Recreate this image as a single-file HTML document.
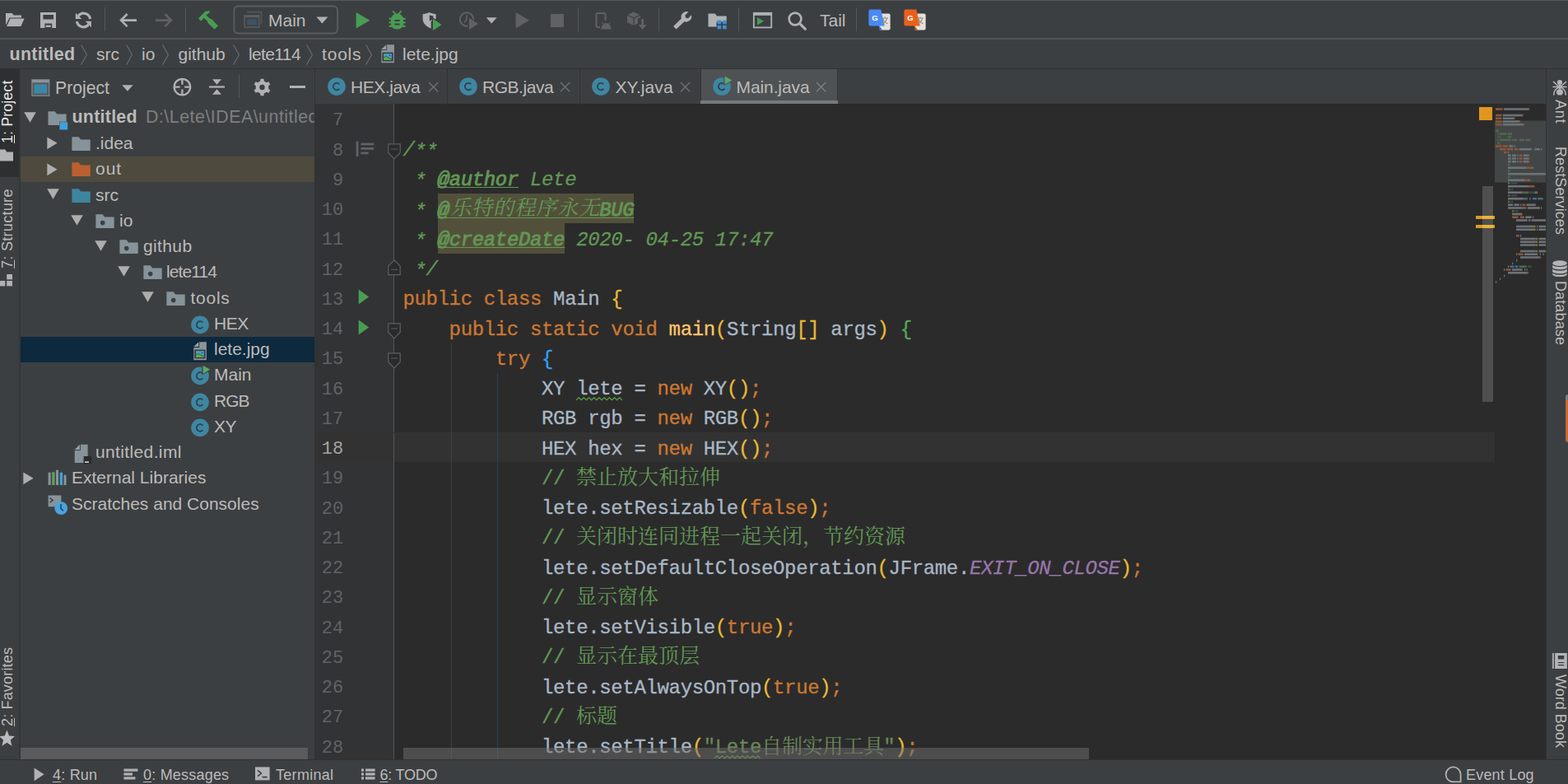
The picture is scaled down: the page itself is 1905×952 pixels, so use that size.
<!DOCTYPE html>
<html lang="en"><head><meta charset="utf-8"><title>untitled - Main.java</title>
<style>
*{box-sizing:border-box}
html,body{margin:0;padding:0}
html{width:1905px;height:952px;overflow:hidden;background:#3c3f41}
body{width:1905px;height:952px;overflow:hidden;background:#3c3f41;position:relative;font-family:"Liberation Sans",sans-serif;font-size:21px;color:#bbbbbb}
.a{position:absolute;display:block}
.t{position:absolute;white-space:pre;font-family:"Liberation Sans",sans-serif}
.m{position:absolute;white-space:pre;font-family:"Liberation Mono",monospace;font-size:24px;letter-spacing:-0.35px;line-height:36px;color:#a9b7c6;-webkit-text-stroke:0.3px}
.k{color:#cc7832}.d{color:#629755;font-style:italic}.dt{color:#629755;font-style:italic;font-weight:normal;text-decoration:underline;text-decoration-thickness:1.2px;text-underline-offset:2.4px;text-decoration-skip-ink:none;-webkit-text-stroke:0.85px}
.c{color:#629755}.s{color:#6a8759}.f{color:#ffc66d}.sf{color:#9876aa;font-style:italic}
.b1{color:#e8ba36}.b2{color:#54a857}.b3{color:#359ff4}
.ln{position:absolute;white-space:pre;font-family:"Liberation Mono",monospace;font-size:22px;line-height:36px;color:#606366;text-align:right;width:60px;left:357.2px}
.vt{position:absolute;white-space:pre;font-size:18px;line-height:24px;color:#bbbbbb;transform-origin:0 0}
u{text-decoration:underline;text-decoration-thickness:1px;text-underline-offset:1.5px}
.st{position:relative;top:2.2px}

</style></head>
<body>
<div class="a" style="left:0px;top:0px;width:1905px;height:1px;background:#55585a;"></div>
<div class="a" style="left:0px;top:46px;width:1905px;height:2px;background:#515355;"></div>
<div class="a" style="left:0px;top:83px;width:1905px;height:1px;background:#2f3133;"></div>
<svg class="a" style="left:7px;top:15px;" width="24" height="18" viewBox="0 0 24 18"><path fill="#afb1b3" d="M0 1h7.6l2 2.4H19v3H4.6L0 15.6z"/><path fill="#afb1b3" d="M5.6 7.6H22.6L18.4 17H1z"/></svg>
<svg class="a" style="left:48px;top:14px;" width="22" height="21" viewBox="0 0 22 21"><path fill="#afb1b3" fill-rule="evenodd" d="M1 1h19v19H1z M4.4 4h12.6v5.6H4.4z M6.4 14.6h8.8V20H6.4z"/><rect x="7.6" y="16.6" width="6" height="2.4" fill="#afb1b3"/></svg>
<svg class="a" style="left:90px;top:13px;" width="24" height="24" viewBox="0 0 24 24"><g fill="none" stroke="#afb1b3" stroke-width="3.2"><path d="M19.600 10A8.100 8.100 0 0 0 5.300 6.300"/><path d="M3.400 13A8.100 8.100 0 0 0 17.700 16.700"/></g><path fill="#afb1b3" d="M1.800 2.700V10H9.500z M20.900 20.200V12.800H13.800z"/></svg>
<div class="a" style="left:127px;top:9px;width:1px;height:29px;background:#555759;"></div>
<svg class="a" style="left:143px;top:15px;" width="26" height="20" viewBox="0 0 26 20"><path fill="none" stroke="#afb1b3" stroke-width="2.6" d="M23 9.6H4 M11.6 2L4 9.6l7.6 7.6"/></svg>
<svg class="a" style="left:187px;top:15px;" width="26" height="20" viewBox="0 0 26 20"><path fill="none" stroke="#5f6163" stroke-width="2.6" d="M2 9.6H21 M13.4 2L21 9.6l-7.6 7.6"/></svg>
<div class="a" style="left:225px;top:9px;width:1px;height:29px;background:#555759;"></div>
<svg class="a" style="left:240px;top:12px;" width="27" height="25" viewBox="0 0 27 25"><path fill="#499c54" d="M0.900 10.400L9.400 1.750L14.700 1.200L15.100 2.700L10.500 6.500L15.600 10.900L16.400 10.500L25.100 19.500L20.500 23.500L12.200 15.600L12.600 14.600L7.900 9.700L4.500 13.500z"/></svg>
<svg class="a" style="left:282px;top:5px;" width="131" height="38" viewBox="0 0 131 38"><rect x="2.400" y="2.500" width="125.700" height="33" rx="5" fill="none" stroke="#5b5e60" stroke-width="1.800"/></svg>
<svg class="a" style="left:296px;top:13px;" width="24" height="22" viewBox="0 0 24 22"><path fill="#53575a" d="M4 0.700H22.300V15.800H20.600V2.600H4z"/><rect x="1.100" y="6" width="17.500" height="14" fill="#3c3f41" stroke="#5a5e61" stroke-width="1.500"/><rect x="0.400" y="5.250" width="18.900" height="3" fill="#5a5e61"/><rect x="4" y="10.200" width="12.100" height="7.200" fill="#3d5363"/></svg>
<div class="t " style="left:326px;top:9.72px;font-size:21px;line-height:29px;color:#bbbbbb;">Main</div>
<svg class="a" style="left:384px;top:20px;" width="15" height="9" viewBox="0 0 15 9"><path fill="#afb1b3" d="M0.4 0.6h14L7.4 8.4z"/></svg>
<svg class="a" style="left:431px;top:14px;" width="20" height="22" viewBox="0 0 20 22"><path fill="#499c54" d="M1.6 1v19.4L18.4 10.7z"/></svg>
<svg class="a" style="left:471px;top:12px;" width="23" height="25" viewBox="0 0 23 25"><g fill="#499c54"><path d="M11.5 4.4C16 4.4 19 7.8 19 12v5c0 4-3 6.4-7.5 6.4S4 21 4 17v-5c0-4.2 3-7.600 7.5-7.600z"/><rect x="1.6" y="9.700" width="20" height="2.200"/><rect x="1.6" y="14.200" width="20" height="2.200"/><rect x="1.6" y="18.700" width="20" height="2.200"/></g><path stroke="#499c54" stroke-width="2" fill="none" d="M6.200 1.400l3.800 4.200 M16.600 1.400l-3.800 4.200"/><path stroke="#3c3f41" stroke-width="2" d="M8.400 13h6.200 M8.400 17.500h6.200"/></svg>
<svg class="a" style="left:512px;top:14px;" width="26" height="25" viewBox="0 0 26 25"><path fill="#afb1b3" d="M1.600 3.200C5 2.800 7.600 2 9.600 1c2 1 4.600 1.800 8 2.200v6L11.600 12v8.400C5 18 1.600 13.600 1.600 8.400z"/><path fill="#3c3f41" d="M9.800 4.200c1.600.6 3 1 4.600 1.200v3.600L9.800 11.600z"/><path fill="#3c3f41" d="M12.600 6.400v18.200l13.800-9.100z"/><path fill="#499c54" d="M14 8.800v14.200l10.600-7.100z"/></svg>
<svg class="a" style="left:556px;top:13px;" width="27" height="26" viewBox="0 0 27 26"><circle cx="11" cy="10.500" r="8.200" fill="none" stroke="#5f6163" stroke-width="2"/><path fill="none" stroke="#5f6163" stroke-width="1.600" d="M11 5v5.600l-3 3.600"/><path fill="#3c3f41" d="M12.600 6.400v18.600l14-9.300z"/><path fill="#5f6163" d="M14 8.800v14.200l11-7.100z"/></svg>
<svg class="a" style="left:590px;top:21px;" width="15" height="9" viewBox="0 0 15 9"><path fill="#afb1b3" d="M0.800 0.200h12.800L7.200 7.400z"/></svg>
<svg class="a" style="left:625px;top:14px;" width="20" height="22" viewBox="0 0 20 22"><path fill="#5f6163" d="M1.6 1v19.4L18 10.7z"/></svg>
<div class="a" style="left:668.5px;top:16.5px;width:16px;height:16px;background:#5f6163;"></div>
<div class="a" style="left:702px;top:9px;width:1px;height:29px;background:#555759;"></div>
<svg class="a" style="left:722px;top:14px;" width="22" height="23" viewBox="0 0 22 23"><rect x="2.500" y="2" width="11" height="17" rx="2" fill="none" stroke="#5f6163" stroke-width="2"/><path fill="#3c3f41" d="M7 11h15v12H7z"/><path fill="#5f6163" d="M8.300 21.400a6.100 7.400 0 0 1 12.200 0z"/><path stroke="#5f6163" stroke-width="1.200" d="M10.800 15.200l-1.300-1.900 M18 15.200l1.300-1.900"/></svg>
<svg class="a" style="left:761px;top:13px;" width="26" height="25" viewBox="0 0 26 25"><path fill="#5f6163" d="M9 1.6l8 3.6v9L9 18 1 14.2v-9z"/><path fill="none" stroke="#3c3f41" stroke-width="1.2" d="M1 5.2l8 3.6 8-3.600 M9 8.800V18"/><path fill="#3c3f41" d="M14 9h11v14H14z"/><path fill="#5f6163" d="M18.200 10h2.800v7h3.600l-5 6-5-6h3.600z"/></svg>
<div class="a" style="left:800px;top:9px;width:1px;height:29px;background:#555759;"></div>
<svg class="a" style="left:817px;top:13px;" width="24" height="23" viewBox="0 0 24 23"><path fill="#afb1b3" d="M15.400 1.200a6.600 6.600 0 0 1 4 .4l-4 4 .6 3 3 .6 4-4a6.600 6.600 0 0 1-8.600 8L4.600 22.600 1 19l9.800-9.600a6.600 6.600 0 0 1 4.600-8.200z"/></svg>
<svg class="a" style="left:859px;top:15px;" width="25" height="22" viewBox="0 0 25 22"><path fill="#afb1b3" d="M1.500 1.500h8.200l2.300 3H23.700v7H11.500v6H1.500z"/><g fill="#3e8ed0"><rect x="12.500" y="9.600" width="4.700" height="4.600"/><rect x="19" y="9.600" width="4.700" height="4.600"/><rect x="12.500" y="15.700" width="4.700" height="4.600"/><rect x="19" y="15.700" width="4.700" height="4.600"/></g></svg>
<div class="a" style="left:897px;top:9px;width:1px;height:29px;background:#555759;"></div>
<svg class="a" style="left:914px;top:14px;" width="25" height="21" viewBox="0 0 25 21"><rect x="1.800" y="1.800" width="21.400" height="17.600" fill="none" stroke="#afb1b3" stroke-width="1.800"/><rect x="1.800" y="1.800" width="21.400" height="3" fill="#afb1b3"/><path fill="#499c54" d="M6 7v9.600l8-4.800z"/></svg>
<svg class="a" style="left:956px;top:13px;" width="25" height="24" viewBox="0 0 25 24"><circle cx="10" cy="10" r="7.400" fill="none" stroke="#afb1b3" stroke-width="2.600"/><path stroke="#afb1b3" stroke-width="3.200" stroke-linecap="round" d="M15.600 15.600l6.600 6.600"/></svg>
<div class="t " style="left:996px;top:10.22px;font-size:21px;line-height:29px;color:#bbbbbb;">Tail</div>
<div class="a" style="left:1040px;top:9px;width:1px;height:29px;background:#555759;"></div>
<svg class="a" style="left:1055px;top:11px;" width="28" height="27" viewBox="0 0 28 27"><path fill="#e4e2da" d="M10 5.600h14.600a2 2 0 0 1 2 2v15.800a2 2 0 0 1-2 2H14z"/><path fill="#3a6fcb" d="M13 20l4 5.600-3.600-.2z"/><path fill="#4a8af4" d="M2.400 0.600h12.800l4.600 20H2.400a2 2 0 0 1-2-2v-16a2 2 0 0 1 2-2z"/><text x="4.200" y="14" font-family="Liberation Sans" font-weight="bold" font-size="9.6" fill="#fff">G</text><g fill="none" stroke="#8a8a80" stroke-width="1.100"><path d="M16 11h8 M20 9.400V11 M17.600 11c.6 3 3 5.600 6 6.800 M22.600 11c-.6 3-2.800 5.800-6 7"/></g></svg>
<svg class="a" style="left:1098px;top:11px;" width="28" height="27" viewBox="0 0 28 27"><path fill="#e4e2da" d="M10 5.600h14.600a2 2 0 0 1 2 2v15.800a2 2 0 0 1-2 2H14z"/><path fill="#c24e14" d="M13 20l4 5.600-3.600-.2z"/><path fill="#e8601c" d="M2.400 0.600h12.800l4.600 20H2.400a2 2 0 0 1-2-2v-16a2 2 0 0 1 2-2z"/><text x="4.200" y="14" font-family="Liberation Sans" font-weight="bold" font-size="9.6" fill="#fff">G</text><g fill="none" stroke="#8a8a80" stroke-width="1.100"><path d="M16 11h8 M20 9.400V11 M17.600 11c.6 3 3 5.600 6 6.800 M22.600 11c-.6 3-2.800 5.800-6 7"/></g></svg>
<div class="t " style="left:11.5px;top:50.58px;font-size:21.4px;line-height:30px;color:#bbbbbb;font-weight:bold;letter-spacing:0.334px;">untitled</div>
<svg class="a" style="left:98.1px;top:53.6px;" width="10" height="25" viewBox="0 0 10 25"><path fill="none" stroke="#6b6e70" stroke-width="1.100" d="M0.600 0.400l6.800 12L0.600 24.400"/></svg>
<div class="t " style="left:117px;top:51.22px;font-size:21px;line-height:29px;color:#bbbbbb;">src</div>
<svg class="a" style="left:152.6px;top:53.6px;" width="10" height="25" viewBox="0 0 10 25"><path fill="none" stroke="#6b6e70" stroke-width="1.100" d="M0.600 0.400l6.800 12L0.600 24.400"/></svg>
<div class="t " style="left:172px;top:51.22px;font-size:21px;line-height:29px;color:#bbbbbb;">io</div>
<svg class="a" style="left:196.6px;top:53.6px;" width="10" height="25" viewBox="0 0 10 25"><path fill="none" stroke="#6b6e70" stroke-width="1.100" d="M0.600 0.400l6.800 12L0.600 24.400"/></svg>
<div class="t " style="left:216.5px;top:51.22px;font-size:21px;line-height:29px;color:#bbbbbb;">github</div>
<svg class="a" style="left:283.3px;top:53.6px;" width="10" height="25" viewBox="0 0 10 25"><path fill="none" stroke="#6b6e70" stroke-width="1.100" d="M0.600 0.400l6.800 12L0.600 24.400"/></svg>
<div class="t " style="left:302px;top:51.22px;font-size:21px;line-height:29px;color:#bbbbbb;letter-spacing:-0.623px;">lete114</div>
<svg class="a" style="left:371.6px;top:53.6px;" width="10" height="25" viewBox="0 0 10 25"><path fill="none" stroke="#6b6e70" stroke-width="1.100" d="M0.600 0.400l6.800 12L0.600 24.400"/></svg>
<div class="t " style="left:391px;top:51.22px;font-size:21px;line-height:29px;color:#bbbbbb;letter-spacing:0.810px;">tools</div>
<svg class="a" style="left:444.20000000000005px;top:53.6px;" width="10" height="25" viewBox="0 0 10 25"><path fill="none" stroke="#6b6e70" stroke-width="1.100" d="M0.600 0.400l6.800 12L0.600 24.400"/></svg>
<svg class="a" style="left:463.4px;top:54.2px;" width="17" height="23" viewBox="0 0 17 23"><path fill="#8d9499" d="M7.200 0.300H15.900V22.300H0.300V7H7.200z"/><path fill="#9ba1a6" d="M0.300 6L6.300 0.300V6z"/><rect x="1.400" y="9.600" width="13.200" height="10.800" fill="#363a3d"/><rect x="3.100" y="11.100" width="9.800" height="7.900" fill="#45a0c8"/><path fill="#5cab48" d="M3.100 19v-3l2.600-1.700 7.200 3.700v1z"/><path fill="none" stroke="#363a3d" stroke-width="0.700" d="M3.100 16l2.600-1.700 7.200 3.700"/><circle cx="10.600" cy="13.300" r="0.800" fill="#363a3d"/></svg>
<div class="t " style="left:489px;top:51.22px;font-size:21px;line-height:29px;color:#bbbbbb;">lete.jpg</div>
<div class="a" style="left:0px;top:84px;width:23px;height:130.5px;background:#2d2f30;"></div>
<div class="a" style="left:23px;top:84px;width:2px;height:839px;background:#34373a;"></div>
<div class="vt" style="left:-2.6px;top:174.4px;font-size:18px;color:#e6e6e6;letter-spacing:0.040px;transform:rotate(-90deg)"><u>1</u>: Project</div>
<svg class="a" style="left:0px;top:181.4px;" width="17" height="16" viewBox="0 0 17 16"><path fill="#b2b4b5" d="M0 0.600h6.200l2 2.800H16V14.400H0z"/></svg>
<div class="vt" style="left:-2.6px;top:326.2px;font-size:18px;color:#bbb;letter-spacing:0.305px;transform:rotate(-90deg)"><u>7</u>: Structure</div>
<svg class="a" style="left:0px;top:332px;" width="16" height="17" viewBox="0 0 16 17"><g fill="#afb1b3"><rect x="-1" y="9" width="7.300" height="6.400"/><rect x="8.200" y="9" width="6.800" height="6.400"/><rect x="8.200" y="1" width="6.800" height="6.400"/></g></svg>
<div class="vt" style="left:-2.6px;top:881.6px;font-size:18px;color:#bbb;letter-spacing:0.169px;transform:rotate(-90deg)"><u>2</u>: Favorites</div>
<svg class="a" style="left:-1px;top:886px;" width="19" height="21" viewBox="0 0 19 21"><path fill="#b8babb" d="M9.400 0.600l2.700 6.900 7 .5-5.400 4.600 1.800 7.200-6.100-4-6.100 4 1.800-7.200L-.3 8l7-.5z"/></svg>
<div class="a" style="left:0px;top:922px;width:1905px;height:1.4px;background:#2f3132;"></div>
<svg class="a" style="left:41px;top:932px;" width="14" height="18" viewBox="0 0 14 18"><path fill="#afb1b3" d="M0.600 0.400v15.800L12.600 8.300z"/></svg>
<div class="t " style="left:64px;top:928.56px;font-size:18px;line-height:25px;color:#bbbbbb;letter-spacing:0.213px;"><u>4</u>: Run</div>
<svg class="a" style="left:149.5px;top:932.6px;" width="19" height="15" viewBox="0 0 19 15"><g fill="#afb1b3"><rect x="0.400" y="0.500" width="17" height="3.200"/><rect x="0.400" y="5.400" width="10.600" height="3.200"/><rect x="0.400" y="10.300" width="14" height="3.200"/></g></svg>
<div class="t " style="left:174px;top:928.56px;font-size:18px;line-height:25px;color:#bbbbbb;letter-spacing:0.205px;"><u>0</u>: Messages</div>
<svg class="a" style="left:310px;top:931px;" width="18" height="17" viewBox="0 0 18 17"><rect x="0" y="0.400" width="17.600" height="16" fill="#afb1b3"/><path fill="none" stroke="#3c3f41" stroke-width="1.600" d="M3 4.400l4.400 3.600L3 11.600 M8.600 12.600h6"/></svg>
<div class="t " style="left:335px;top:928.56px;font-size:18px;line-height:25px;color:#bbbbbb;letter-spacing:0.297px;">Terminal</div>
<svg class="a" style="left:439px;top:932.6px;" width="17" height="15" viewBox="0 0 17 15"><g fill="#afb1b3"><rect x="0" y="0.500" width="3" height="3.200"/><rect x="5" y="0.500" width="11.600" height="3.200"/><rect x="0" y="5.400" width="3" height="3.200"/><rect x="5" y="5.400" width="11.600" height="3.200"/><rect x="0" y="10.300" width="3" height="3.200"/><rect x="5" y="10.300" width="11.600" height="3.200"/></g></svg>
<div class="t " style="left:461.5px;top:928.56px;font-size:18px;line-height:25px;color:#bbbbbb;letter-spacing:-0.210px;"><u>6</u>: TODO</div>
<svg class="a" style="left:1755px;top:929.6px;" width="22" height="22" viewBox="0 0 22 22"><path fill="none" stroke="#afb1b3" stroke-width="1.800" d="M19.600 10.400A9 9 0 1 0 10.600 19.400H19.600z"/></svg>
<div class="t " style="left:1781px;top:928.56px;font-size:18px;line-height:25px;color:#bbbbbb;letter-spacing:0.192px;">Event Log</div>
<svg class="a" style="left:38px;top:96px;" width="23" height="22" viewBox="0 0 23 22"><rect x="0.900" y="0.900" width="20.800" height="19.400" fill="#555b5f" stroke="#7d878d" stroke-width="1.300"/><rect x="0.900" y="0.900" width="20.800" height="3.400" fill="#89949a"/><rect x="3.600" y="6.300" width="15.400" height="11.200" fill="#3b88a8"/></svg>
<div class="t " style="left:67px;top:91.65px;font-size:21.2px;line-height:30px;color:#bbbbbb;">Project</div>
<svg class="a" style="left:148px;top:103px;" width="14" height="8" viewBox="0 0 14 8"><path fill="#afb1b3" d="M0.200 0.200h13.400L6.900 7.800z"/></svg>
<svg class="a" style="left:209px;top:94px;" width="25" height="24" viewBox="0 0 25 24"><circle cx="12.400" cy="11.600" r="9.800" fill="none" stroke="#afb1b3" stroke-width="2.300"/><path stroke="#afb1b3" stroke-width="2.300" d="M12.400 1.400v7.400 M12.400 14.400v7.400 M2.200 11.600h7.400 M15.200 11.600h7.400"/></svg>
<svg class="a" style="left:253px;top:95px;" width="21" height="21" viewBox="0 0 21 21"><path fill="#afb1b3" d="M5 1.200h11l-5.500 6.600z M5 19.800h11l-5.500-6.600z"/><rect x="1" y="9.400" width="19" height="2.200" fill="#afb1b3"/></svg>
<div class="a" style="left:290px;top:90px;width:1px;height:29px;background:#555759;"></div>
<svg class="a" style="left:307px;top:95px;" width="23" height="23" viewBox="0 0 23 23"><path fill="#afb1b3" fill-rule="evenodd" d="M19.20 12.78 L21.33 14.39 L19.35 17.82 L16.89 16.78 L13.81 18.55 L13.48 21.21 L9.52 21.21 L9.19 18.55 L6.11 16.78 L3.65 17.82 L1.67 14.39 L3.80 12.78 L3.80 9.22 L1.67 7.61 L3.65 4.18 L6.11 5.22 L9.19 3.45 L9.52 0.79 L13.48 0.79 L13.81 3.45 L16.89 5.22 L19.35 4.18 L21.33 7.61 L19.20 9.22z M14.70 11.00a3.2 3.2 0 1 0 -6.40 0a3.2 3.2 0 1 0 6.40 0z"/></svg>
<div class="a" style="left:352px;top:103.5px;width:19px;height:3.2px;background:#afb1b3;"></div>
<div class="a" style="left:25px;top:190.0px;width:357.5px;height:31.25px;background:#4e4a3e;"></div>
<div class="a" style="left:25px;top:408.75px;width:357.5px;height:31.25px;background:#0d293e;"></div>
<svg class="a" style="left:28.6px;top:135.7px;" width="16" height="14" viewBox="0 0 16 14"><path fill="#adadad" d="M0.200 0.300h14.600L7.500 12.700z"/></svg>
<svg class="a" style="left:58px;top:134.9px;" width="25" height="23" viewBox="0 0 25 23"><path fill="#87939a" d="M0.500 0.300h8.200l2.500 3.200H22.600V12.800h-8.600v4.200H0.500z"/><rect x="14.400" y="13.200" width="9.800" height="9.300" fill="#40a0dc"/></svg>
<div class="t " style="left:87.5px;top:127.28px;font-size:21.4px;line-height:30px;color:#bbbbbb;font-weight:bold;letter-spacing:0.262px;">untitled</div>
<div class="t " style="left:177px;top:127.28px;font-size:21.4px;line-height:30px;color:#7d7f80;letter-spacing:0.488px;">D:\Lete\IDEA\untitled</div>
<svg class="a" style="left:57px;top:166.45px;" width="14" height="16" viewBox="0 0 14 16"><path fill="#adadad" d="M0.300 0.400v14.800L12.600 7.800z"/></svg>
<svg class="a" style="left:87px;top:166.15px;" width="24" height="18" viewBox="0 0 24 18"><path fill="#87939a" d="M0.400 0.200h8.200l2.500 3.200H22.700V17H0.400z"/></svg>
<div class="t " style="left:116px;top:159.17px;font-size:21px;line-height:29px;color:#bbbbbb;">.idea</div>
<svg class="a" style="left:57px;top:197.7px;" width="14" height="16" viewBox="0 0 14 16"><path fill="#adadad" d="M0.300 0.400v14.800L12.600 7.800z"/></svg>
<svg class="a" style="left:87px;top:197.4px;" width="24" height="18" viewBox="0 0 24 18"><path fill="#bb6030" d="M0.400 0.200h8.200l2.500 3.200H22.700V17H0.400z"/></svg>
<div class="t " style="left:116px;top:190.42px;font-size:21px;line-height:29px;color:#bbbbbb;letter-spacing:1.003px;">out</div>
<svg class="a" style="left:57.1px;top:229.45px;" width="16" height="14" viewBox="0 0 16 14"><path fill="#adadad" d="M0.200 0.300h14.600L7.500 12.700z"/></svg>
<svg class="a" style="left:87px;top:228.65px;" width="24" height="18" viewBox="0 0 24 18"><path fill="#3e86a0" d="M0.400 0.200h8.200l2.500 3.200H22.700V17H0.400z"/></svg>
<div class="t " style="left:116px;top:221.67px;font-size:21px;line-height:29px;color:#bbbbbb;">src</div>
<svg class="a" style="left:85.6px;top:260.7px;" width="16" height="14" viewBox="0 0 16 14"><path fill="#adadad" d="M0.200 0.300h14.600L7.500 12.700z"/></svg>
<svg class="a" style="left:116px;top:259.9px;" width="24" height="18" viewBox="0 0 24 18"><path fill="#87939a" d="M0.400 0.200h8.200l2.500 3.200H22.700V17H0.400z"/><circle cx="8.700" cy="10.600" r="2.800" fill="#3c3f41"/></svg>
<div class="t " style="left:145px;top:252.92px;font-size:21px;line-height:29px;color:#bbbbbb;">io</div>
<svg class="a" style="left:114.6px;top:291.95px;" width="16" height="14" viewBox="0 0 16 14"><path fill="#adadad" d="M0.200 0.300h14.600L7.500 12.700z"/></svg>
<svg class="a" style="left:145px;top:291.15px;" width="24" height="18" viewBox="0 0 24 18"><path fill="#87939a" d="M0.400 0.200h8.200l2.500 3.200H22.700V17H0.400z"/><circle cx="8.700" cy="10.600" r="2.800" fill="#3c3f41"/></svg>
<div class="t " style="left:174px;top:284.17px;font-size:21px;line-height:29px;color:#bbbbbb;letter-spacing:0.376px;">github</div>
<svg class="a" style="left:143.1px;top:323.2px;" width="16" height="14" viewBox="0 0 16 14"><path fill="#adadad" d="M0.200 0.300h14.600L7.500 12.700z"/></svg>
<svg class="a" style="left:173.5px;top:322.4px;" width="24" height="18" viewBox="0 0 24 18"><path fill="#87939a" d="M0.400 0.200h8.200l2.500 3.200H22.700V17H0.400z"/><circle cx="8.700" cy="10.600" r="2.800" fill="#3c3f41"/></svg>
<div class="t " style="left:202px;top:315.42px;font-size:21px;line-height:29px;color:#bbbbbb;letter-spacing:-0.915px;">lete114</div>
<svg class="a" style="left:172.1px;top:354.45px;" width="16" height="14" viewBox="0 0 16 14"><path fill="#adadad" d="M0.200 0.300h14.600L7.500 12.700z"/></svg>
<svg class="a" style="left:202px;top:353.65px;" width="24" height="18" viewBox="0 0 24 18"><path fill="#87939a" d="M0.400 0.200h8.200l2.500 3.200H22.700V17H0.400z"/><circle cx="8.700" cy="10.600" r="2.800" fill="#3c3f41"/></svg>
<div class="t " style="left:231.5px;top:346.67px;font-size:21px;line-height:29px;color:#bbbbbb;letter-spacing:0.748px;">tools</div>
<svg class="a" style="left:231.5px;top:382.8px;overflow:visible;" width="26" height="23" viewBox="0 0 26 23"><circle cx="11" cy="11.400" r="10.800" fill="#3f86a1"/><path fill="none" stroke="#2a4350" stroke-width="1.700" d="M14.400 8.700a4.300 4.300 0 1 0 0 5.600"/></svg>
<div class="t " style="left:260px;top:377.92px;font-size:21px;line-height:29px;color:#bbbbbb;letter-spacing:-0.491px;">HEX</div>
<svg class="a" style="left:234.6px;top:414.55px;" width="17" height="23" viewBox="0 0 17 23"><path fill="#8d9499" d="M7.200 0.300H15.900V22.300H0.300V7H7.200z"/><path fill="#9ba1a6" d="M0.300 6L6.300 0.300V6z"/><rect x="1.400" y="9.600" width="13.200" height="10.800" fill="#363a3d"/><rect x="3.100" y="11.100" width="9.800" height="7.900" fill="#45a0c8"/><path fill="#5cab48" d="M3.100 19v-3l2.600-1.700 7.200 3.700v1z"/><path fill="none" stroke="#363a3d" stroke-width="0.700" d="M3.100 16l2.600-1.700 7.200 3.700"/><circle cx="10.600" cy="13.300" r="0.800" fill="#363a3d"/></svg>
<div class="t " style="left:260px;top:409.17px;font-size:21px;line-height:29px;color:#bbbbbb;">lete.jpg</div>
<svg class="a" style="left:231.5px;top:445.3px;overflow:visible;" width="26" height="23" viewBox="0 0 26 23"><circle cx="11" cy="11.400" r="10.800" fill="#3f86a1"/><path fill="none" stroke="#2a4350" stroke-width="1.700" d="M14.400 8.700a4.300 4.300 0 1 0 0 5.600"/><path fill="#3c3f41" d="M13.400 -2.600l11.600 6.400-11.600 6.800z"/><path fill="#59a869" d="M14.600 -1.200l8.600 5-8.600 5.200z"/></svg>
<div class="t " style="left:260px;top:440.42px;font-size:21px;line-height:29px;color:#bbbbbb;">Main</div>
<svg class="a" style="left:231.5px;top:476.55px;overflow:visible;" width="26" height="23" viewBox="0 0 26 23"><circle cx="11" cy="11.400" r="10.800" fill="#3f86a1"/><path fill="none" stroke="#2a4350" stroke-width="1.700" d="M14.400 8.700a4.300 4.300 0 1 0 0 5.600"/></svg>
<div class="t " style="left:260px;top:471.67px;font-size:21px;line-height:29px;color:#bbbbbb;letter-spacing:-0.954px;">RGB</div>
<svg class="a" style="left:231.5px;top:507.8px;overflow:visible;" width="26" height="23" viewBox="0 0 26 23"><circle cx="11" cy="11.400" r="10.800" fill="#3f86a1"/><path fill="none" stroke="#2a4350" stroke-width="1.700" d="M14.400 8.700a4.300 4.300 0 1 0 0 5.600"/></svg>
<div class="t " style="left:260px;top:502.92px;font-size:21px;line-height:29px;color:#bbbbbb;letter-spacing:-0.415px;">XY</div>
<svg class="a" style="left:90px;top:539.15px;" width="22" height="26" viewBox="0 0 22 26"><path fill="#87939a" d="M7.900 0.700H16.600v22.400H0.700V7.900H7.900z"/><path fill="#97a2a9" d="M0.700 6.900L6.900 0.700V6.900z"/><rect x="11.600" y="15" width="9.600" height="9.400" fill="#2b2b2b"/><rect x="13" y="21.300" width="5" height="1.600" fill="#d8d8d8"/></svg>
<div class="t " style="left:116px;top:534.17px;font-size:21px;line-height:29px;color:#bbbbbb;letter-spacing:0.366px;">untitled.iml</div>
<svg class="a" style="left:27.9px;top:572.7px;" width="14" height="16" viewBox="0 0 14 16"><path fill="#adadad" d="M0.300 0.400v14.800L12.600 7.800z"/></svg>
<svg class="a" style="left:58px;top:570.0px;" width="24" height="20" viewBox="0 0 24 20"><rect x="0.600" y="3.700" width="3.100" height="15.300" fill="#87939a"/><rect x="5.200" y="3.200" width="3.400" height="15.800" fill="#62a05a"/><rect x="10" y="0.700" width="3" height="18.300" fill="#87939a"/><rect x="14.700" y="3.700" width="3.300" height="15.300" fill="#40a0dc"/><rect x="19.500" y="6.800" width="3" height="12.200" fill="#87939a"/></svg>
<div class="t " style="left:87px;top:565.42px;font-size:21px;line-height:29px;color:#bbbbbb;">External Libraries</div>
<svg class="a" style="left:58px;top:600.95px;" width="26" height="25" viewBox="0 0 26 25"><path fill="#87939a" d="M0.600 0.500h15.800v9A8.400 8.400 0 0 0 8.600 14.300H0.600z"/><path fill="none" stroke="#3c3f41" stroke-width="1.400" d="M2.600 3.600l3.600 2.800-3.600 2.800"/><circle cx="16.200" cy="16.200" r="7.900" fill="#48a3de"/><path fill="none" stroke="#26404f" stroke-width="1.500" d="M16 11v5.600l3 2.600"/></svg>
<div class="t " style="left:87px;top:596.67px;font-size:21px;line-height:29px;color:#bbbbbb;">Scratches and Consoles</div>
<div class="a" style="left:25px;top:908px;width:349px;height:14px;background:#595b5d;"></div>
<div class="a" style="left:382px;top:84px;width:1px;height:839px;background:#323232;"></div>
<div class="a" style="left:852px;top:84px;width:165px;height:38.5px;background:#4e5254;"></div>
<div class="a" style="left:851px;top:122px;width:167px;height:4.6px;background:#747a80;"></div>
<div class="a" style="left:543px;top:84px;width:1px;height:42px;background:#323232;"></div>
<div class="a" style="left:704px;top:84px;width:1px;height:42px;background:#323232;"></div>
<div class="a" style="left:851px;top:84px;width:1px;height:38px;background:#323232;"></div>
<div class="a" style="left:1017px;top:84px;width:1px;height:38px;background:#323232;"></div>
<svg class="a" style="left:397.5px;top:94.4px;overflow:visible;" width="26" height="23" viewBox="0 0 26 23"><circle cx="11" cy="11" r="10.800" fill="#3f86a1"/><path fill="none" stroke="#2a4350" stroke-width="1.700" d="M14.400 8.300a4.300 4.300 0 1 0 0 5.600"/></svg>
<div class="t " style="left:426px;top:90.92px;font-size:21px;line-height:29px;color:#bbb;letter-spacing:-0.420px;">HEX.java</div>
<svg class="a" style="left:519.9px;top:98.8px;" width="14" height="14" viewBox="0 0 14 14"><path stroke="#6e7072" stroke-width="1.400" d="M1 1l11.200 11.200 M12.200 1L1 12.200"/></svg>
<svg class="a" style="left:557.5px;top:94.4px;overflow:visible;" width="26" height="23" viewBox="0 0 26 23"><circle cx="11" cy="11" r="10.800" fill="#3f86a1"/><path fill="none" stroke="#2a4350" stroke-width="1.700" d="M14.400 8.300a4.300 4.300 0 1 0 0 5.600"/></svg>
<div class="t " style="left:586px;top:90.92px;font-size:21px;line-height:29px;color:#bbb;letter-spacing:-0.467px;">RGB.java</div>
<svg class="a" style="left:680.4px;top:98.8px;" width="14" height="14" viewBox="0 0 14 14"><path stroke="#6e7072" stroke-width="1.400" d="M1 1l11.200 11.200 M12.200 1L1 12.200"/></svg>
<svg class="a" style="left:718.5px;top:94.4px;overflow:visible;" width="26" height="23" viewBox="0 0 26 23"><circle cx="11" cy="11" r="10.800" fill="#3f86a1"/><path fill="none" stroke="#2a4350" stroke-width="1.700" d="M14.400 8.300a4.300 4.300 0 1 0 0 5.600"/></svg>
<div class="t " style="left:747.5px;top:90.92px;font-size:21px;line-height:29px;color:#bbb;letter-spacing:0.072px;">XY.java</div>
<svg class="a" style="left:826.4px;top:98.8px;" width="14" height="14" viewBox="0 0 14 14"><path stroke="#6e7072" stroke-width="1.400" d="M1 1l11.200 11.200 M12.200 1L1 12.200"/></svg>
<svg class="a" style="left:865.5px;top:94.4px;overflow:visible;" width="26" height="23" viewBox="0 0 26 23"><circle cx="11" cy="11" r="10.800" fill="#3f86a1"/><path fill="none" stroke="#2a4350" stroke-width="1.700" d="M14.400 8.300a4.300 4.300 0 1 0 0 5.600"/><path fill="#4e5254" d="M13.400 -3l11.600 6.400-11.600 6.800z"/><path fill="#59a869" d="M14.600 -1.600l8.600 5-8.600 5.200z"/></svg>
<div class="t " style="left:894.5px;top:90.920px;font-size:21px;line-height:29px;color:#bbb;letter-spacing:-0.097px;">Main.java</div>
<svg class="a" style="left:991.4px;top:98.8px;" width="14" height="14" viewBox="0 0 14 14"><path stroke="#7c7f81" stroke-width="1.400" d="M1 1l11.200 11.200 M12.200 1L1 12.200"/></svg>
<div class="a" style="left:383px;top:126px;width:1495px;height:796px;background:#2b2b2b;"></div>
<div class="a" style="left:383px;top:126px;width:95px;height:796px;background:#313335;"></div>
<div class="a" style="left:478px;top:126px;width:1px;height:796px;background:#555555;"></div>
<div class="a" style="left:383px;top:525.2px;width:1433px;height:36px;background:#323232;"></div>
<div class="a" style="left:478px;top:525.5px;width:1px;height:36px;background:#555555;"></div>
<div class="a" style="left:532px;top:234.8px;width:238px;height:36.4px;background:#52503a;"></div>
<div class="a" style="left:532px;top:271.2px;width:154px;height:37px;background:#52503a;"></div>
<div class="a" style="left:548px;top:417px;width:1px;height:505px;background:#37443a;"></div>
<div class="a" style="left:604px;top:453px;width:1px;height:469px;background:#2f4156;"></div>
<div class="m" style="left:489.4px;top:165.06px;"><span class="d">/<span class="st">**</span></span></div>
<div class="m" style="left:489.4px;top:201.31px;"><span class="d"> <span class="st">*</span> <span class="dt">@author</span> Lete</span></div>
<div class="m" style="left:489.4px;top:237.56px;"><span class="d"> <span class="st">*</span> <span class="dt">@</span></span></div>
<div class="m" style="left:489.4px;top:273.81px;"><span class="d"> <span class="st">*</span> <span class="dt">@createDate</span> 2020- 04-25 17:47</span></div>
<div class="m" style="left:489.4px;top:310.06px;"><span class="d"> <span class="st">*</span>/</span></div>
<div class="m" style="left:489.4px;top:346.31px;"><span class="k">public class </span>Main <span class="b1">{</span></div>
<div class="m" style="left:545.6px;top:382.56px;"><span class="k">public static void </span><span class="f">main</span><span class="b1">(</span>String<span class="b1">[]</span> args<span class="b1">)</span> <span class="b2">{</span></div>
<div class="m" style="left:601.8px;top:418.81px;"><span class="k">try </span><span class="b3">{</span></div>
<div class="m" style="left:658.0px;top:455.06px;">XY lete = <span class="k">new </span>XY<span class="b1">()</span><span class="k">;</span></div>
<div class="m" style="left:658.0px;top:491.31px;">RGB rgb = <span class="k">new </span>RGB<span class="b1">()</span><span class="k">;</span></div>
<div class="m" style="left:658.0px;top:527.56px;">HEX hex = <span class="k">new </span>HEX<span class="b1">()</span><span class="k">;</span></div>
<div class="m" style="left:658.0px;top:563.81px;"><span class="c">// </span></div>
<div class="m" style="left:658.0px;top:600.06px;">lete.setResizable<span class="b1">(</span><span class="k">false</span><span class="b1">)</span><span class="k">;</span></div>
<div class="m" style="left:658.0px;top:636.31px;"><span class="c">// </span></div>
<div class="m" style="left:658.0px;top:672.56px;">lete.setDefaultCloseOperation<span class="b1">(</span>JFrame.<span class="sf">EXIT_ON_CLOSE</span><span class="b1">)</span><span class="k">;</span></div>
<div class="m" style="left:658.0px;top:708.81px;"><span class="c">// </span></div>
<div class="m" style="left:658.0px;top:745.06px;">lete.setVisible<span class="b1">(</span><span class="k">true</span><span class="b1">)</span><span class="k">;</span></div>
<div class="m" style="left:658.0px;top:781.31px;"><span class="c">// </span></div>
<div class="m" style="left:658.0px;top:817.56px;">lete.setAlwaysOnTop<span class="b1">(</span><span class="k">true</span><span class="b1">)</span><span class="k">;</span></div>
<div class="m" style="left:658.0px;top:853.81px;"><span class="c">// </span></div>
<div class="m" style="left:658.0px;top:890.06px;">lete.setTitle<span class="b1">(</span><span class="s">"Lete</span></div>
<div class="m" style="left:728.2px;top:237.56px;"><span class="dt">BUG</span></div>
<div class="a" style="left:546px;top:264.15px;width:183px;height:1.2px;background:#629755;"></div>
<svg class="a" style="left:546.5px;top:239.25px;overflow:visible" width="190" height="25.5" viewBox="0 0 7451 1000"><text transform="translate(187 0) skewX(-12)" x="0" y="880" font-size="1000" letter-spacing="20" fill="#629755" font-family="'Liberation Mono','Noto Serif CJK SC',monospace">乐特的程序永无</text></svg>
<svg class="a" style="left:700.1px;top:565.50px;overflow:visible" width="183" height="25.0" viewBox="0 0 7320 1000"><text x="0" y="880" font-size="1000" fill="#629755" font-family="'Liberation Mono','Noto Serif CJK SC',monospace">禁止放大和拉伸</text></svg>
<svg class="a" style="left:700.1px;top:638.00px;overflow:visible" width="408" height="25.0" viewBox="0 0 16320 1000"><text x="0" y="880" font-size="1000" fill="#629755" font-family="'Liberation Mono','Noto Serif CJK SC',monospace">关闭时连同进程一起关闭，节约资源</text></svg>
<svg class="a" style="left:700.1px;top:710.50px;overflow:visible" width="108" height="25.0" viewBox="0 0 4320 1000"><text x="0" y="880" font-size="1000" fill="#629755" font-family="'Liberation Mono','Noto Serif CJK SC',monospace">显示窗体</text></svg>
<svg class="a" style="left:700.1px;top:783.00px;overflow:visible" width="158" height="25.0" viewBox="0 0 6320 1000"><text x="0" y="880" font-size="1000" fill="#629755" font-family="'Liberation Mono','Noto Serif CJK SC',monospace">显示在最顶层</text></svg>
<svg class="a" style="left:700.1px;top:855.50px;overflow:visible" width="58" height="25.0" viewBox="0 0 2320 1000"><text x="0" y="880" font-size="1000" fill="#629755" font-family="'Liberation Mono','Noto Serif CJK SC',monospace">标题</text></svg>
<svg class="a" style="left:924.6px;top:893.35px;overflow:visible" width="157" height="25.0" viewBox="0 0 6272 1000"><text x="0" y="880" font-size="1000" letter-spacing="-8" fill="#6a8759" font-family="'Liberation Mono','Noto Serif CJK SC',monospace">自制实用工具</text></svg>
<div class="m" style="left:1073.2px;top:890.06px;"><span class="s">"</span><span class="b1">)</span><span class="k">;</span></div>
<svg class="a" style="left:700px;top:482.35px;" width="56" height="5" viewBox="0 0 56 5"><path fill="none" stroke="#5a9a46" stroke-width="1.200" stroke-linejoin="round" d="M0 3.800L3.1 0.8L6.2 3.8L9.3 0.8L12.4 3.8L15.5 0.8L18.6 3.8L21.7 0.8L24.8 3.8L27.9 0.8L31.0 3.8L34.1 0.8L37.2 3.8L40.3 0.8L43.4 3.8L46.5 0.8L49.6 3.8L52.7 0.8L55.8 3.8L58.9 0.8"/></svg>
<svg class="a" style="left:868px;top:917.35px;" width="56" height="5" viewBox="0 0 56 5"><path fill="none" stroke="#5a9a46" stroke-width="1.200" stroke-linejoin="round" d="M0 3.800L3.1 0.8L6.2 3.8L9.3 0.8L12.4 3.8L15.5 0.8L18.6 3.8L21.7 0.8L24.8 3.8L27.9 0.8L31.0 3.8L34.1 0.8L37.2 3.8L40.3 0.8L43.4 3.8L46.5 0.8L49.6 3.8L52.7 0.8L55.8 3.8L58.9 0.8"/></svg>
<div class="ln" style="top:129.25px;color:#606366">7</div>
<div class="ln" style="top:165.50px;color:#606366">8</div>
<div class="ln" style="top:201.75px;color:#606366">9</div>
<div class="ln" style="top:238.00px;color:#606366">10</div>
<div class="ln" style="top:274.25px;color:#606366">11</div>
<div class="ln" style="top:310.50px;color:#606366">12</div>
<div class="ln" style="top:346.75px;color:#606366">13</div>
<div class="ln" style="top:383.00px;color:#606366">14</div>
<div class="ln" style="top:419.25px;color:#606366">15</div>
<div class="ln" style="top:455.50px;color:#606366">16</div>
<div class="ln" style="top:491.75px;color:#606366">17</div>
<div class="ln" style="top:528.00px;color:#a4a3a3">18</div>
<div class="ln" style="top:564.25px;color:#606366">19</div>
<div class="ln" style="top:600.50px;color:#606366">20</div>
<div class="ln" style="top:636.75px;color:#606366">21</div>
<div class="ln" style="top:673.00px;color:#606366">22</div>
<div class="ln" style="top:709.25px;color:#606366">23</div>
<div class="ln" style="top:745.50px;color:#606366">24</div>
<div class="ln" style="top:781.75px;color:#606366">25</div>
<div class="ln" style="top:818.00px;color:#606366">26</div>
<div class="ln" style="top:854.25px;color:#606366">27</div>
<div class="ln" style="top:890.50px;color:#606366">28</div>
<svg class="a" style="left:432px;top:170.75px;" width="23" height="20" viewBox="0 0 23 20"><g fill="#5e6366"><rect x="0.700" y="0.500" width="2.800" height="18.600"/><rect x="6.400" y="2.600" width="15.800" height="2.800"/><rect x="6.400" y="8" width="15.800" height="2.800"/><rect x="6.400" y="13.500" width="9.400" height="2.800"/></g></svg>
<svg class="a" style="left:434.6px;top:351.4px;" width="15" height="20" viewBox="0 0 15 20"><path fill="#499c54" d="M0.700 0.400v18.200L13.200 9.500z"/></svg>
<svg class="a" style="left:434.6px;top:387.65px;" width="15" height="20" viewBox="0 0 15 20"><path fill="#499c54" d="M0.700 0.400v18.200L13.200 9.500z"/></svg>
<svg class="a" style="left:470.5px;top:174.15px;" width="17" height="20" viewBox="0 0 17 20"><path fill="#2b2b2b" stroke="#5c5f62" stroke-width="1.200" d="M0.800 0.800h14.400v10.600L8 18.800 0.800 11.400z"/><path stroke="#5c5f62" stroke-width="1" d="M4 7h8"/></svg>
<svg class="a" style="left:470.5px;top:314.95px;" width="17" height="20" viewBox="0 0 17 20"><path fill="#2b2b2b" stroke="#5c5f62" stroke-width="1.200" d="M0.800 18.600h14.400V8L8 0.800 0.800 8z"/><path stroke="#5c5f62" stroke-width="1" d="M4 12.400h8"/></svg>
<svg class="a" style="left:470.5px;top:391.65px;" width="17" height="20" viewBox="0 0 17 20"><path fill="#2b2b2b" stroke="#5c5f62" stroke-width="1.200" d="M0.800 0.800h14.400v10.600L8 18.800 0.800 11.400z"/><path stroke="#5c5f62" stroke-width="1" d="M4 7h8"/></svg>
<svg class="a" style="left:470.5px;top:427.9px;" width="17" height="20" viewBox="0 0 17 20"><path fill="#2b2b2b" stroke="#5c5f62" stroke-width="1.200" d="M0.800 0.800h14.400v10.600L8 18.800 0.800 11.400z"/><path stroke="#5c5f62" stroke-width="1" d="M4 7h8"/></svg>
<div class="a" style="left:490px;top:908px;width:833px;height:14px;background:rgba(111,111,111,0.5);"></div>
<div class="a" style="left:1797px;top:130px;width:16px;height:16px;background:#e0961f;"></div>
<div class="a" style="left:1801px;top:226px;width:13px;height:262px;background:#4f4f4f;"></div>
<div class="a" style="left:1793px;top:262px;width:23px;height:4px;background:#dc9a26;"></div>
<div class="a" style="left:1793px;top:273px;width:23px;height:4px;background:#dc9a26;"></div>
<div class="a" style="left:1801px;top:262px;width:13px;height:4px;background:#e8b23c;"></div>
<div class="a" style="left:1801px;top:273px;width:13px;height:4px;background:#e8b23c;"></div>
<svg class="a" style="left:1816px;top:126px" width="62" height="240" viewBox="0 0 62 240"><rect x="0" y="20.500" width="62" height="75" fill="#434646"/><rect x="1.00" y="5.20" width="8.75" height="2.600" fill="#8a5638"/><rect x="11.00" y="5.20" width="30.00" height="2.600" fill="#6c7278"/><rect x="41.00" y="5.20" width="1.25" height="2.600" fill="#8a5638"/><rect x="1.00" y="12.70" width="7.50" height="2.600" fill="#8a5638"/><rect x="9.75" y="12.70" width="23.75" height="2.600" fill="#6c7278"/><rect x="33.50" y="12.70" width="1.25" height="2.600" fill="#8a5638"/><rect x="1.00" y="16.45" width="7.50" height="2.600" fill="#8a5638"/><rect x="9.75" y="16.45" width="13.750" height="2.600" fill="#6c7278"/><rect x="23.50" y="16.45" width="1.25" height="2.600" fill="#8a5638"/><rect x="1.00" y="20.20" width="7.50" height="2.600" fill="#8a5638"/><rect x="9.75" y="20.20" width="20.00" height="2.600" fill="#6c7278"/><rect x="29.75" y="20.20" width="1.25" height="2.600" fill="#8a5638"/><rect x="1.00" y="23.95" width="7.50" height="2.600" fill="#8a5638"/><rect x="9.75" y="23.95" width="25.00" height="2.600" fill="#6c7278"/><rect x="34.75" y="23.95" width="1.25" height="2.600" fill="#8a5638"/><rect x="1.00" y="31.45" width="3.75" height="2.600" fill="#506650"/><rect x="3.50" y="35.20" width="1.25" height="2.600" fill="#506650"/><rect x="6.00" y="35.20" width="8.75" height="2.600" fill="#506650"/><rect x="16.00" y="35.20" width="5.00" height="2.600" fill="#506650"/><rect x="3.50" y="38.95" width="1.25" height="2.600" fill="#506650"/><rect x="6.00" y="38.95" width="1.25" height="2.600" fill="#506650"/><rect x="7.25" y="38.95" width="8.75" height="2.600" fill="#3e4a40"/><rect x="16.00" y="38.95" width="3.75" height="2.600" fill="#506650"/><rect x="3.50" y="42.70" width="1.25" height="2.600" fill="#506650"/><rect x="6.00" y="42.70" width="13.75" height="2.600" fill="#506650"/><rect x="21.00" y="42.70" width="6.25" height="2.600" fill="#506650"/><rect x="29.75" y="42.70" width="6.25" height="2.600" fill="#506650"/><rect x="37.25" y="42.70" width="6.25" height="2.600" fill="#506650"/><rect x="3.50" y="46.45" width="2.50" height="2.600" fill="#506650"/><rect x="1.00" y="50.20" width="7.50" height="2.600" fill="#8a5638"/><rect x="9.75" y="50.20" width="6.25" height="2.600" fill="#8a5638"/><rect x="17.25" y="50.20" width="5.00" height="2.600" fill="#6c7278"/><rect x="23.50" y="50.20" width="1.25" height="2.600" fill="#6c7278"/><rect x="6.00" y="53.95" width="7.50" height="2.600" fill="#8a5638"/><rect x="14.75" y="53.95" width="7.50" height="2.600" fill="#8a5638"/><rect x="23.50" y="53.95" width="5.00" height="2.600" fill="#8a5638"/><rect x="29.75" y="53.95" width="15.00" height="2.600" fill="#6c7278"/><rect x="48.50" y="53.95" width="6.25" height="2.600" fill="#6c7278"/><rect x="56.00" y="53.95" width="1.25" height="2.600" fill="#6c7278"/><rect x="11.00" y="57.70" width="3.75" height="2.600" fill="#8a5638"/><rect x="16.00" y="57.70" width="1.25" height="2.600" fill="#6c7278"/><rect x="16.00" y="61.45" width="3.75" height="2.600" fill="#6c7278"/><rect x="21.00" y="61.45" width="5.00" height="2.600" fill="#6c7278"/><rect x="27.25" y="61.45" width="1.25" height="2.600" fill="#6c7278"/><rect x="29.75" y="61.45" width="3.75" height="2.600" fill="#8a5638"/><rect x="34.75" y="61.45" width="6.25" height="2.600" fill="#6c7278"/><rect x="41.00" y="61.45" width="1.25" height="2.600" fill="#8a5638"/><rect x="16.00" y="65.20" width="3.75" height="2.600" fill="#6c7278"/><rect x="21.00" y="65.20" width="5.00" height="2.600" fill="#6c7278"/><rect x="27.25" y="65.20" width="1.25" height="2.600" fill="#6c7278"/><rect x="29.75" y="65.20" width="3.75" height="2.600" fill="#8a5638"/><rect x="34.75" y="65.20" width="6.25" height="2.600" fill="#6c7278"/><rect x="41.00" y="65.20" width="1.25" height="2.600" fill="#8a5638"/><rect x="16.00" y="68.95" width="3.75" height="2.600" fill="#6c7278"/><rect x="21.00" y="68.95" width="5.00" height="2.600" fill="#6c7278"/><rect x="27.25" y="68.95" width="1.25" height="2.600" fill="#6c7278"/><rect x="29.75" y="68.95" width="3.75" height="2.600" fill="#8a5638"/><rect x="34.75" y="68.95" width="6.25" height="2.600" fill="#6c7278"/><rect x="41.00" y="68.95" width="1.25" height="2.600" fill="#8a5638"/><rect x="16.00" y="72.70" width="2.50" height="2.600" fill="#506650"/><rect x="19.75" y="72.70" width="8.75" height="2.600" fill="#3e4a40"/><rect x="16.00" y="76.45" width="22.50" height="2.600" fill="#6c7278"/><rect x="38.50" y="76.45" width="6.25" height="2.600" fill="#8a5638"/><rect x="44.75" y="76.45" width="1.25" height="2.600" fill="#6c7278"/><rect x="46.00" y="76.45" width="1.25" height="2.600" fill="#8a5638"/><rect x="16.00" y="80.20" width="2.50" height="2.600" fill="#506650"/><rect x="19.75" y="80.20" width="20.00" height="2.600" fill="#3e4a40"/><rect x="16.00" y="83.95" width="46.00" height="2.600" fill="#6c7278"/><rect x="16.00" y="87.70" width="2.50" height="2.600" fill="#506650"/><rect x="19.75" y="87.70" width="5.00" height="2.600" fill="#3e4a40"/><rect x="16.00" y="91.45" width="20.00" height="2.600" fill="#6c7278"/><rect x="36.00" y="91.45" width="5.00" height="2.600" fill="#8a5638"/><rect x="41.00" y="91.45" width="1.25" height="2.600" fill="#6c7278"/><rect x="42.25" y="91.45" width="1.25" height="2.600" fill="#8a5638"/><rect x="16.00" y="95.20" width="2.50" height="2.600" fill="#506650"/><rect x="19.75" y="95.20" width="7.50" height="2.600" fill="#3e4a40"/><rect x="16.00" y="98.95" width="25.00" height="2.600" fill="#6c7278"/><rect x="41.00" y="98.95" width="5.00" height="2.600" fill="#8a5638"/><rect x="46.00" y="98.95" width="1.25" height="2.600" fill="#6c7278"/><rect x="47.25" y="98.95" width="1.25" height="2.600" fill="#8a5638"/><rect x="16.00" y="102.70" width="2.50" height="2.600" fill="#506650"/><rect x="19.75" y="102.70" width="2.50" height="2.600" fill="#3e4a40"/><rect x="16.00" y="106.45" width="17.50" height="2.600" fill="#6c7278"/><rect x="33.50" y="106.45" width="7.50" height="2.600" fill="#506650"/><rect x="41.00" y="106.45" width="7.50" height="2.600" fill="#3e4a40"/><rect x="48.50" y="106.45" width="2.50" height="2.600" fill="#6c7278"/><rect x="51.00" y="106.45" width="1.25" height="2.600" fill="#8a5638"/><rect x="16.00" y="110.20" width="2.50" height="2.600" fill="#506650"/><rect x="19.75" y="110.20" width="7.50" height="2.600" fill="#3e4a40"/><rect x="16.00" y="113.95" width="18.75" height="2.600" fill="#6c7278"/><rect x="34.75" y="113.95" width="5.00" height="2.600" fill="#3f6c8a"/><rect x="42.25" y="113.95" width="1.25" height="2.600" fill="#6c7278"/><rect x="46.00" y="113.95" width="5.00" height="2.600" fill="#3f6c8a"/><rect x="52.25" y="113.95" width="5.00" height="2.600" fill="#3f6c8a"/><rect x="57.25" y="113.95" width="1.25" height="2.600" fill="#6c7278"/><rect x="16.00" y="117.70" width="2.50" height="2.600" fill="#506650"/><rect x="19.75" y="117.70" width="2.50" height="2.600" fill="#3e4a40"/><rect x="16.00" y="121.45" width="6.25" height="2.600" fill="#6c7278"/><rect x="23.50" y="121.45" width="6.25" height="2.600" fill="#6c7278"/><rect x="31.00" y="121.45" width="1.25" height="2.600" fill="#6c7278"/><rect x="33.50" y="121.45" width="3.75" height="2.600" fill="#8a5638"/><rect x="38.50" y="121.45" width="11.25" height="2.600" fill="#6c7278"/><rect x="16.00" y="125.20" width="18.75" height="2.600" fill="#6c7278"/><rect x="34.75" y="125.20" width="3.75" height="2.600" fill="#8a5638"/><rect x="39.75" y="125.20" width="15.00" height="2.600" fill="#6c7278"/><rect x="56.00" y="125.20" width="1.25" height="2.600" fill="#6c7278"/><rect x="21.00" y="128.95" width="2.50" height="2.600" fill="#506650"/><rect x="24.75" y="128.95" width="3.75" height="2.600" fill="#3e4a40"/><rect x="21.00" y="132.70" width="12.50" height="2.600" fill="#6c7278"/><rect x="21.00" y="136.45" width="7.50" height="2.600" fill="#8a5638"/><rect x="31.00" y="136.45" width="5.00" height="2.600" fill="#8a5638"/><rect x="37.25" y="136.45" width="7.50" height="2.600" fill="#6c7278"/><rect x="46.00" y="136.45" width="1.25" height="2.600" fill="#6c7278"/><rect x="26.00" y="140.20" width="13.75" height="2.600" fill="#6c7278"/><rect x="41.00" y="140.20" width="2.50" height="2.600" fill="#6c7278"/><rect x="44.75" y="140.20" width="17.25" height="2.600" fill="#6c7278"/><rect x="26.00" y="147.70" width="20.00" height="2.600" fill="#6c7278"/><rect x="46.00" y="147.70" width="3.75" height="2.600" fill="#7a7042"/><rect x="51.00" y="147.70" width="1.25" height="2.600" fill="#6c7278"/><rect x="53.50" y="147.70" width="8.50" height="2.600" fill="#6c7278"/><rect x="26.00" y="151.45" width="20.00" height="2.600" fill="#6c7278"/><rect x="46.00" y="151.45" width="3.75" height="2.600" fill="#7a7042"/><rect x="51.00" y="151.45" width="1.25" height="2.600" fill="#6c7278"/><rect x="53.50" y="151.45" width="8.50" height="2.600" fill="#6c7278"/><rect x="26.00" y="158.95" width="3.75" height="2.600" fill="#8a5638"/><rect x="31.00" y="158.95" width="1.25" height="2.600" fill="#6c7278"/><rect x="31.00" y="162.70" width="18.75" height="2.600" fill="#6c7278"/><rect x="49.75" y="162.70" width="2.50" height="2.600" fill="#7a7042"/><rect x="53.50" y="162.70" width="8.50" height="2.600" fill="#6c7278"/><rect x="31.00" y="166.45" width="18.75" height="2.600" fill="#6c7278"/><rect x="49.75" y="166.45" width="2.50" height="2.600" fill="#7a7042"/><rect x="53.50" y="166.45" width="8.50" height="2.600" fill="#6c7278"/><rect x="31.00" y="170.20" width="18.75" height="2.600" fill="#6c7278"/><rect x="49.75" y="170.20" width="2.50" height="2.600" fill="#7a7042"/><rect x="53.50" y="170.20" width="8.50" height="2.600" fill="#6c7278"/><rect x="31.00" y="177.70" width="18.75" height="2.600" fill="#6c7278"/><rect x="49.75" y="177.70" width="2.50" height="2.600" fill="#7a7042"/><rect x="53.50" y="177.70" width="8.50" height="2.600" fill="#6c7278"/><rect x="26.00" y="181.45" width="1.25" height="2.600" fill="#6c7278"/><rect x="28.50" y="181.45" width="6.25" height="2.600" fill="#8a5638"/><rect x="36.00" y="181.45" width="16.25" height="2.600" fill="#6c7278"/><rect x="54.75" y="181.45" width="1.25" height="2.600" fill="#6c7278"/><rect x="58.50" y="181.45" width="1.25" height="2.600" fill="#6c7278"/><rect x="31.00" y="185.20" width="23.75" height="2.600" fill="#6c7278"/><rect x="54.75" y="185.20" width="1.25" height="2.600" fill="#8a5638"/><rect x="26.00" y="188.95" width="1.25" height="2.600" fill="#6c7278"/><rect x="21.00" y="192.70" width="1.25" height="2.600" fill="#6c7278"/><rect x="16.00" y="196.45" width="1.25" height="2.600" fill="#6c7278"/><rect x="18.50" y="196.45" width="5.00" height="2.600" fill="#3f6c8a"/><rect x="24.75" y="196.45" width="3.75" height="2.600" fill="#3f6c8a"/><rect x="29.75" y="196.45" width="8.75" height="2.600" fill="#506650"/><rect x="39.75" y="196.45" width="5.00" height="2.600" fill="#3e4a40"/><rect x="11.00" y="200.20" width="1.25" height="2.600" fill="#6c7278"/><rect x="13.50" y="200.20" width="6.25" height="2.600" fill="#8a5638"/><rect x="21.00" y="200.20" width="12.50" height="2.600" fill="#6c7278"/><rect x="36.00" y="200.20" width="1.25" height="2.600" fill="#6c7278"/><rect x="38.50" y="200.20" width="1.25" height="2.600" fill="#6c7278"/><rect x="16.00" y="203.95" width="23.75" height="2.600" fill="#6c7278"/><rect x="39.75" y="203.95" width="1.25" height="2.600" fill="#8a5638"/><rect x="11.00" y="207.70" width="1.25" height="2.600" fill="#6c7278"/><rect x="6.00" y="211.45" width="1.25" height="2.600" fill="#6c7278"/><rect x="1.00" y="215.20" width="1.25" height="2.600" fill="#6c7278"/></svg>
<div class="a" style="left:1878px;top:84px;width:1px;height:839px;background:#323232;"></div>
<svg class="a" style="left:1886px;top:96px;" width="19" height="21" viewBox="0 0 19 21"><g fill="#b2b4b5"><circle cx="9" cy="4.100" r="3.100"/><ellipse cx="9" cy="9.500" rx="1.900" ry="2.800"/><ellipse cx="9" cy="15.900" rx="4" ry="3.700"/></g><g fill="none" stroke="#b2b4b5" stroke-width="1.500" stroke-linecap="round"><path d="M1.500 3.400L7 8.500 M16.500 3.400L11 8.500 M1 9.500H17 M7 10.600C3.500 12 2 14.600 1.800 19 M11 10.600C14.500 12 16 14.600 16.200 19"/></g></svg>
<div class="vt" style="left:1908.2px;top:120.8px;font-size:18px;color:#bbb;letter-spacing:0.691px;transform:rotate(90deg)">Ant</div>
<div class="vt" style="left:1908.2px;top:178.2px;font-size:18px;color:#bbb;letter-spacing:0.079px;transform:rotate(90deg)">RestServices</div>
<svg class="a" style="left:1886px;top:315.6px;" width="19" height="21" viewBox="0 0 19 21"><g fill="#b2b4b5"><ellipse cx="9" cy="3.700" rx="8.800" ry="3.400"/><path d="M0.200 5.800c1.800 3 15.800 3 17.600 0v3.300c-1.800 3-15.800 3-17.600 0z M0.200 10.600c1.800 3 15.800 3 17.600 0v3.300c-1.800 3-15.800 3-17.600 0z M0.200 15.400c1.800 3 15.800 3 17.600 0v1.800c-1.400 3.800-16.200 3.800-17.600 0z"/></g></svg>
<div class="vt" style="left:1908.2px;top:340.5px;font-size:18px;color:#bbb;letter-spacing:0.121px;transform:rotate(90deg)">Database</div>
<svg class="a" style="left:1885px;top:792px;" width="20" height="21" viewBox="0 0 20 21"><rect x="0.800" y="0.900" width="2.200" height="19.100" fill="#9ea4a9"/><path fill="#b2b4b5" fill-rule="evenodd" d="M4.100 0.900h14.700v19.100H4.100z M7.800 4h7.500v4.400H7.800z M7.800 12h7.500v1.200H7.800z M7.800 15h7.500v1.300H7.800z"/></svg>
<div class="vt" style="left:1908.2px;top:818.6px;font-size:18px;color:#bbb;letter-spacing:0.024px;transform:rotate(90deg)">Word Book</div>
<div class="a" style="left:1901.800px;top:479px;width:8px;height:58px;background:#7a7d7f;border-radius:3px"></div>
<div class="a" style="left:1903px;top:486px;width:8px;height:50px;background:#e8601c;border-radius:1px 0 0 2px"></div>
</body></html>
